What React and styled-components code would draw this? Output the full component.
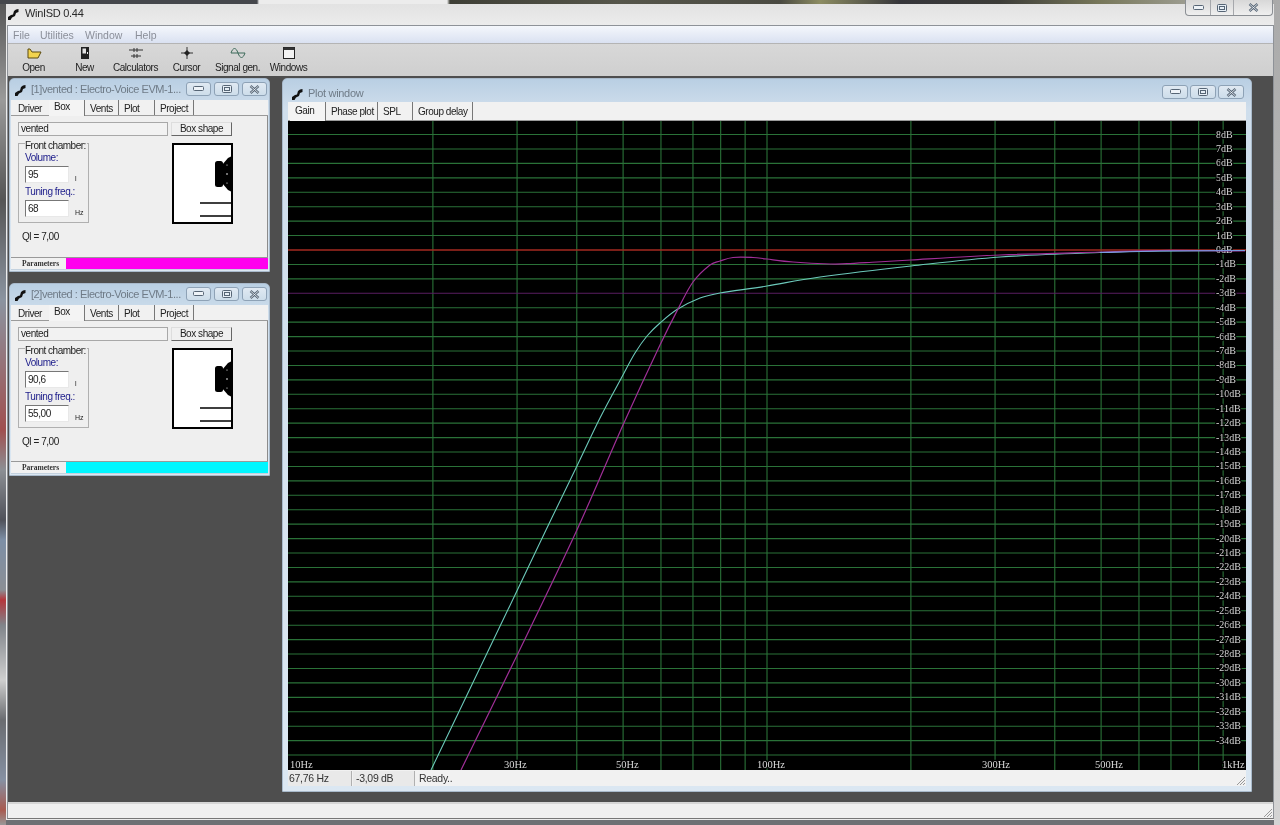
import styled, {createGlobalStyle} from "styled-components";

const GlobalStyle = createGlobalStyle`
  * {
    box-sizing: border-box;
  }
  html, body {
    margin: 0;
    padding: 0;
    background: #4d4d4d;
  }
  body {
    font-family: "Liberation Sans", Arial, sans-serif;
    font-size: 10px;
    letter-spacing: -0.45px;
    color: #222;
  }
`;

const Frame = styled.div`
  width: 1280px;
  height: 825px;
  padding: 0 6px 6px 7px;
  display: flex;
  flex-direction: column;
  overflow: hidden;
  filter: blur(0.3px);
  background:
    linear-gradient(90deg, #45474c 0, #45474c 257px, #ececec 259px, #ececec 447px, #3e3f36 450px, #55554a 620px, #4a4a42 780px, #8c8c62 820px, #35353a 900px, #3c3c38 1000px, #77775a 1100px, #9c9c90 1187px, #aaa 1280px) top / 100% 4px no-repeat,
    linear-gradient(180deg, #555 0, #9a9a9a 100px, #555 200px, #8b94a0 300px, #a05050 430px, #8c8f94 470px, #50525a 520px, #7d8fa6 540px, #8b8f95 590px, #b5363c 600px, #80848a 625px, #cfcfcf 680px, #6a6c70 720px, #8691a3 780px, #a85a50 810px, #999 825px) left / 6px 100% no-repeat,
    linear-gradient(180deg, #aaa 0, #d4d4d4 100%) right / 6px 100% no-repeat,
    linear-gradient(180deg, #6e7074 0, #6e7074 100%) bottom / 100% 5px no-repeat,
    linear-gradient(180deg, #e2e2e2 4px, #ececec 25px);
`;

const Caption = styled.div`
  height: 25px;
  flex: none;
  display: flex;
  align-items: flex-start;
`;

const AppIcon = styled.svg`
  width: 12px;
  height: 14px;
  flex: none;
  margin: ${(p) => p.$margin || "7px 6px 0 0"};
`;

const AppTitle = styled.span`
  margin-top: 7px;
  font-size: 11px;
  letter-spacing: -0.3px;
  color: #2a2a2a;
`;

const CaptionButtons = styled.div`
  margin-left: auto;
  margin-right: 1px;
  display: flex;
  height: 16px;
  background: linear-gradient(180deg, #d8d8d8, #efefef);
  border: 1px solid #8b8f94;
  border-top: 0;
  border-radius: 0 0 4px 4px;
`;

const CaptionButton = styled.div`
  width: ${(p) => p.$w}px;
  display: flex;
  align-items: center;
  justify-content: center;
  & + & {
    border-left: 1px solid #a6a8ac;
  }
`;

const Client = styled.div`
  flex: 1;
  display: flex;
  flex-direction: column;
  min-height: 0;
  border: 1px solid #8e9298;
  border-bottom: 1px solid #777;
`;

const MenuBar = styled.div`
  height: 18px;
  flex: none;
  display: flex;
  align-items: center;
  padding-left: 5px;
  background: linear-gradient(180deg, #f4f7fc, #dae1f1);
  border-bottom: 1px solid #b4b4b4;
`;

const MenuItem = styled.span`
  width: ${(p) => p.$w}px;
  font-size: 10.5px;
  letter-spacing: 0;
  color: #8b8f99;
`;

const Toolbar = styled.div`
  height: 32px;
  flex: none;
  display: flex;
  background: linear-gradient(180deg, #d8d8d8, #cfcfcf);
`;

const ToolButton = styled.div`
  width: 51px;
  display: flex;
  flex-direction: column;
  align-items: center;
  padding-top: 2px;
  font-size: 10px;
  line-height: 12px;
  color: #222;
  white-space: nowrap;
`;

const ToolIcon = styled.svg`
  width: 16px;
  height: 14px;
  margin-bottom: 2px;
`;

const Mdi = styled.div`
  flex: 1;
  min-height: 0;
  display: flex;
  gap: 12px;
  padding: 2px 0 0 1px;
  background: #4e4e4e;
  overflow: hidden;
`;

const LeftColumn = styled.div`
  width: 261px;
  flex: none;
  display: flex;
  flex-direction: column;
  gap: 11px;
`;

const ChildWindow = styled.div`
  display: flex;
  flex-direction: column;
  flex: none;
  width: ${(p) => p.$w}px;
  height: ${(p) => p.$h}px;
  padding: 0 ${(p) => p.$edge}px ${(p) => p.$edge}px;
  border-radius: 5px 5px 0 0;
  background: linear-gradient(180deg, #b9cfe3 0, #cfdeec 30px, #dbe7f2 100%);
  border: 1px solid #a9bacb;
`;

const ChildTitle = styled.div`
  height: ${(p) => p.$h}px;
  flex: none;
  display: flex;
  align-items: flex-start;
`;

const ChildName = styled.span`
  margin-top: ${(p) => p.$top}px;
  font-size: 11px;
  letter-spacing: ${(p) => p.$track}px;
  color: #6f7b87;
  white-space: nowrap;
`;

const ChildButtons = styled.div`
  margin-left: auto;
  margin-top: ${(p) => p.$top}px;
  margin-right: ${(p) => p.$right}px;
  display: flex;
  gap: ${(p) => p.$gap}px;
`;

const ChildButton = styled.div`
  width: ${(p) => p.$w}px;
  height: 14px;
  border: 1px solid #8ea2b6;
  border-radius: 3px;
  background: linear-gradient(180deg, #e0e9f2, #cdddea);
  display: flex;
  align-items: center;
  justify-content: center;
`;

const TabRow = styled.div`
  flex: none;
  height: ${(p) => p.$h}px;
  display: flex;
  padding-left: ${(p) => p.$pad}px;
  background: #f1f1f1;
  border-bottom: 1px solid #9a9a9a;
`;

const Tab = styled.div`
  width: ${(p) => p.$w}px;
  padding-left: 5px;
  padding-top: ${(p) => (p.$active ? 1 : 3)}px;
  font-size: 10px;
  line-height: 12px;
  color: #222;
  white-space: nowrap;
  border-right: ${(p) => (p.$plain ? "0" : "1px solid #777")};
  background: ${(p) => (p.$active ? "#f4f4f4" : "transparent")};
  height: ${(p) => (p.$active ? "calc(100% + 1px)" : "100%")};
`;

const PlotTab = styled(Tab)`
  padding-top: ${(p) => (p.$active ? 3 : 4)}px;
`;

const Body = styled.div`
  flex: 1;
  min-height: 0;
  display: flex;
  flex-direction: column;
  background: #efefef;
  border-right: 1px solid #8c8c8c;
  padding: 6px 0 0 7px;
`;

const TopLine = styled.div`
  display: flex;
  gap: 3px;
  width: 214px;
`;

const NameInput = styled.div`
  flex: 1;
  height: 14px;
  padding-left: 2px;
  font-size: 10px;
  line-height: 12px;
  background: #f2f2f2;
  border: 1px solid #a8a8a8;
`;

const ShapeButton = styled.div`
  width: 61px;
  height: 14px;
  font-size: 10px;
  line-height: 12px;
  text-align: center;
  background: #f0f0f0;
  border: 1px solid;
  border-color: #ddd #666 #666 #ddd;
`;

const MiddleLine = styled.div`
  display: flex;
  margin-top: 7px;
`;

const GroupBox = styled.div`
  position: relative;
  width: 71px;
  height: 80px;
  padding: 8px 0 0 6px;
  border: 1px solid #b0b0b0;
`;

const GroupLegend = styled.span`
  position: absolute;
  top: -4px;
  left: 6px;
  padding-right: 1px;
  background: #efefef;
  font-size: 10px;
  line-height: 11px;
  letter-spacing: -0.5px;
  white-space: nowrap;
`;

const FieldLabel = styled.div`
  font-size: 10px;
  line-height: 12px;
  height: 14px;
  color: #1c1c8a;
  white-space: nowrap;
`;

const FieldRow = styled.div`
  display: flex;
  align-items: flex-end;
  margin-bottom: 3px;
`;

const NumberInput = styled.div`
  width: 44px;
  height: 17px;
  padding-left: 2px;
  font-size: 10px;
  line-height: 15px;
  background: #fff;
  border: 1px solid;
  border-color: #777 #e8e8e8 #e8e8e8 #777;
`;

const Unit = styled.span`
  margin-left: 6px;
  font-size: 7px;
  letter-spacing: 0;
  line-height: 8px;
  color: #222;
`;

const BoxPicture = styled.svg`
  width: 61px;
  height: 81px;
  margin-left: 83px;
  flex: none;
`;

const QlText = styled.div`
  margin: 7px 0 0 4px;
  font-size: 10px;
  line-height: 12px;
`;

const ParamBar = styled.div`
  flex: none;
  height: 13px;
  display: flex;
  background: ${(p) => p.$color};
  border-top: 1px solid #999;
  border-bottom: 1px solid #c4d2df;
`;

const ParamTab = styled.div`
  width: 55px;
  background: #f1f1f1;
  padding-left: 11px;
  font-family: "Liberation Serif", serif;
  font-size: 7.5px;
  font-weight: bold;
  letter-spacing: 0;
  line-height: 11px;
  color: #333;
`;

const PlotBody = styled.div`
  flex: 1;
  min-height: 0;
  display: flex;
  flex-direction: column;
  background: #efefef;
`;

const Chart = styled.svg`
  display: block;
  flex: none;
  width: 958px;
  height: 649px;
  background: #000;
`;

const PlotStatus = styled.div`
  flex: 1;
  display: flex;
  position: relative;
  font-size: 10.5px;
  letter-spacing: -0.3px;
  line-height: 14px;
  padding-top: 1px;
  color: #333;
  background: #f1f1f1;
`;

const StatusCell = styled.div`
  width: ${(p) => p.$w}px;
  flex: none;
  padding-left: ${(p) => p.$pad}px;
  height: 15px;
  background: ${(p) => (p.$flat ? "transparent" : "#e9e9e9")};
  border-right: ${(p) => (p.$flat ? "0" : "1px solid #b0b0b0")};
  margin-right: ${(p) => (p.$flat ? 0 : 1)}px;
`;

const Grip = styled.svg`
  position: absolute;
  right: 0;
  bottom: 0;
  width: 11px;
  height: 11px;
`;

const AppStatus = styled.div`
  position: relative;
  flex: none;
  height: 16px;
  background: #f0f0f0;
  border-top: 2px solid #d6d6d6;
`;

const Wrench = ({margin}) => (
  <AppIcon viewBox="0 0 12 14" $margin={margin}>
    <path d="M1 13 L1 10 L4 8 L6 7.5 L7 4 L9 2.5 L11.5 2 L11.5 5 L9 6 L8 9 L5 10.5 L3.5 13 Z" fill="#111" />
  </AppIcon>
);

const MinGlyph = () => (
  <svg width="11" height="6" viewBox="0 0 11 6">
    <rect x="0.5" y="0.5" width="10" height="4" rx="1" fill="#eef3f8" stroke="#566575" />
  </svg>
);

const MaxGlyph = () => (
  <svg width="10" height="8" viewBox="0 0 10 8">
    <rect x="0.5" y="0.5" width="9" height="7" rx="1" fill="#e6eef5" stroke="#566575" />
    <rect x="2.5" y="2.5" width="5" height="3" fill="none" stroke="#566575" />
  </svg>
);

const CloseGlyph = () => (
  <svg width="11" height="9" viewBox="0 0 11 9">
    <path d="M1.5 1 L9.5 8 M9.5 1 L1.5 8" stroke="#566575" strokeWidth="2.4" />
    <path d="M1.5 1 L9.5 8 M9.5 1 L1.5 8" stroke="#f0f4f8" strokeWidth="0.8" />
  </svg>
);

const ChildControls = ({top, right, gap, w}) => (
  <ChildButtons $top={top} $right={right} $gap={gap}>
    <ChildButton $w={w}><MinGlyph /></ChildButton>
    <ChildButton $w={w}><MaxGlyph /></ChildButton>
    <ChildButton $w={w}><CloseGlyph /></ChildButton>
  </ChildButtons>
);

const tools = [
  {
    label: "Open",
    icon: <path d="M2 4 L2 12 L12 12 L15 6 L6 6 L4 3 L2 3 Z" fill="#f2d34e" stroke="#5a4a10" />,
  },
  {
    label: "New",
    icon: (
      <>
        <rect x="4" y="1" width="8" height="12" fill="#222" />
        <rect x="5.5" y="2.5" width="3.5" height="5" fill="#e4e4e4" />
        <rect x="10" y="6" width="1" height="2" fill="#eee" />
      </>
    ),
  },
  {
    label: "Calculators",
    icon: <path d="M1 4 H15 M3 10 H13 M6 2 V6 M9 2 V6 M6 8 V12 M9 8 V12" stroke="#333" fill="none" />,
  },
  {
    label: "Cursor",
    icon: (
      <>
        <path d="M8 1 V13 M2 7 H14" stroke="#333" />
        <path d="M8 4 L11 7 L8 10 L5 7 Z" fill="#222" />
      </>
    ),
  },
  {
    label: "Signal gen.",
    icon: <path d="M1 7 C3 1 6 1 8 7 C10 13 13 13 15 7 M1 7 H15" stroke="#3d6a5a" fill="none" />,
  },
  {
    label: "Windows",
    icon: (
      <>
        <rect x="2.5" y="1.5" width="11" height="11" fill="#f2f2f2" stroke="#222" />
        <rect x="2.5" y="1.5" width="11" height="2.5" fill="#333" />
      </>
    ),
  },
];

const Speaker = () => (
  <BoxPicture viewBox="0 0 61 81">
    <rect x="1" y="1" width="59" height="79" fill="#fff" stroke="#000" strokeWidth="2" />
    <rect x="43" y="18" width="8" height="26" rx="2.5" fill="#000" />
    <path d="M50 22 L56 15 L60 13 L60 49 L56 47 L50 40 Z" fill="#000" />
    <circle cx="55" cy="31" r="0.8" fill="#fff" />
    <circle cx="55" cy="22" r="0.6" fill="#fff" />
    <circle cx="55" cy="40" r="0.6" fill="#fff" />
    <path d="M28 60 H60 M28 73 H60" stroke="#000" strokeWidth="1.4" />
  </BoxPicture>
);

const ProjectWindow = ({index, volume, tuning, color}) => (
  <ChildWindow $w={261} $h={index === 1 ? 194 : 193} $edge={1}>
    <ChildTitle $h={21}>
      <Wrench margin="4px 5px 0 3px" />
      <ChildName $top={4} $track={-0.45}>[{index}]vented : Electro-Voice EVM-1...</ChildName>
      <ChildControls top={3} right={1} gap={3} w={25} />
    </ChildTitle>
    <TabRow $h={16} $pad={2}>
      <Tab $w={36} $plain>Driver</Tab>
      <Tab $w={36} $active>Box</Tab>
      <Tab $w={34}>Vents</Tab>
      <Tab $w={36}>Plot</Tab>
      <Tab $w={39}>Project</Tab>
    </TabRow>
    <Body>
      <TopLine>
        <NameInput>vented</NameInput>
        <ShapeButton>Box shape</ShapeButton>
      </TopLine>
      <MiddleLine>
        <GroupBox>
          <GroupLegend>Front chamber:</GroupLegend>
          <FieldLabel>Volume:</FieldLabel>
          <FieldRow>
            <NumberInput>{volume}</NumberInput>
            <Unit>l</Unit>
          </FieldRow>
          <FieldLabel>Tuning freq.:</FieldLabel>
          <FieldRow>
            <NumberInput>{tuning}</NumberInput>
            <Unit>Hz</Unit>
          </FieldRow>
        </GroupBox>
        <Speaker />
      </MiddleLine>
      <QlText>Ql = 7,00</QlText>
    </Body>
    <ParamBar $color={color}>
      <ParamTab>Parameters</ParamTab>
    </ParamBar>
  </ChildWindow>
);

// chart coordinates: plot area starts at page x 288, y 121
const OX = 288;
const OY = 121;
const freqX = (f) => 289 + Math.log10(f / 10) * 478 - OX;
const dbY = (db) => 250 - db * 14.43 - OY;

const freqLines = [20, 30, 40, 50, 60, 70, 80, 90, 100, 200, 300, 400, 500, 600, 700, 800, 900];
const dbLines = [];
for (let d = 8; d >= -35; d--) dbLines.push(d);

const hzLabels = [
  ["10Hz", 290],
  ["30Hz", 504],
  ["50Hz", 616],
  ["100Hz", 757],
  ["300Hz", 982],
  ["500Hz", 1095],
  ["1kHz", 1222],
];

const cyanPts = [
  [431, 770], [515, 595], [546, 530], [576, 468], [600, 418], [623, 375], [635, 353], [647, 336], [660, 323],
  [677, 309.5], [700, 298], [720, 293], [767, 286], [820, 277], [911, 266], [1000, 257], [1100, 252.5],
  [1160, 251], [1245, 250.5],
];
const purplePts = [
  [461, 770], [516.7, 656], [576, 532], [623, 425], [660, 345], [678, 309], [693, 282], [710, 265],
  [720, 261], [733, 257.5], [753, 257.5], [767, 259], [793, 262], [830, 264], [847, 263.7], [877, 262],
  [911, 260], [1000, 255], [1100, 252], [1160, 250.5], [1245, 251],
];

// smooth line through the points (catmull-rom to bezier)
const curvePath = (pts) => {
  const p = pts.map(([x, y]) => [x - OX, y - OY]);
  let d = `M${p[0][0]} ${p[0][1]}`;
  for (let i = 0; i < p.length - 1; i++) {
    const a = p[i - 1] || p[i];
    const b = p[i];
    const c = p[i + 1];
    const e = p[i + 2] || c;
    const c1x = b[0] + (c[0] - a[0]) / 6;
    const c1y = b[1] + (c[1] - a[1]) / 6;
    const c2x = c[0] - (e[0] - b[0]) / 6;
    const c2y = c[1] - (e[1] - b[1]) / 6;
    d += ` C${c1x.toFixed(1)} ${c1y.toFixed(1)} ${c2x.toFixed(1)} ${c2y.toFixed(1)} ${c[0]} ${c[1]}`;
  }
  return d;
};

const labelStyle = {
  fontFamily: '"Liberation Serif", serif',
  fill: "#d8d8d8",
  letterSpacing: 0,
  paintOrder: "stroke",
  stroke: "#000",
  strokeWidth: 2.5,
};

const GainChart = () => (
  <Chart viewBox="0 0 958 649">
    {freqLines.map((f) => (
      <line key={f} x1={freqX(f)} x2={freqX(f)} y1="0" y2="649" stroke="#2a7238" strokeWidth="1.1" />
    ))}
    {dbLines.map((d) => (
      <line
        key={d}
        x1="0"
        x2="958"
        y1={dbY(d)}
        y2={dbY(d)}
        stroke={d === 0 ? "#a52a20" : d === -3 ? "#5a1e62" : "#2a7238"}
        strokeWidth={d === 0 ? 1.4 : 1.1}
      />
    ))}
    {dbLines.filter((d) => d > -35).map((d) => (
      <text key={d} x={1216 - OX} y={dbY(d) + 3} fontSize="10" style={labelStyle}>
        {d}dB
      </text>
    ))}
    {hzLabels.map(([t, x]) => (
      <text key={t} x={x - OX} y="647" fontSize="10.5" style={labelStyle}>
        {t}
      </text>
    ))}
    <path d={curvePath(cyanPts)} fill="none" stroke="#6cc9bb" strokeWidth="1.1" />
    <path d={curvePath(purplePts)} fill="none" stroke="#a02f98" strokeWidth="1.2" />
    <path d={curvePath(cyanPts.slice(-3))} fill="none" stroke="#7a9ce0" strokeWidth="1.1" />
  </Chart>
);

const GripMark = () => (
  <Grip viewBox="0 0 11 11">
    <path d="M10 2 L2 10 M10 5 L5 10 M10 8 L8 10" stroke="#999" />
  </Grip>
);

const App = () => {
  return (
    <Frame>
      <GlobalStyle />
      <Caption>
        <Wrench />
        <AppTitle>WinISD 0.44</AppTitle>
        <CaptionButtons>
          <CaptionButton $w={24}><MinGlyph /></CaptionButton>
          <CaptionButton $w={23}><MaxGlyph /></CaptionButton>
          <CaptionButton $w={39}><CloseGlyph /></CaptionButton>
        </CaptionButtons>
      </Caption>
      <Client>
        <MenuBar>
          <MenuItem $w={27}>File</MenuItem>
          <MenuItem $w={45}>Utilities</MenuItem>
          <MenuItem $w={50}>Window</MenuItem>
          <MenuItem $w={30}>Help</MenuItem>
        </MenuBar>
        <Toolbar>
          {tools.map((t) => (
            <ToolButton key={t.label}>
              <ToolIcon viewBox="0 0 16 14">{t.icon}</ToolIcon>
              {t.label}
            </ToolButton>
          ))}
        </Toolbar>
        <Mdi>
          <LeftColumn>
            <ProjectWindow index={1} volume="95" tuning="68" color="#ff00ee" />
            <ProjectWindow index={2} volume="90,6" tuning="55,00" color="#00f6ff" />
          </LeftColumn>
          <ChildWindow $w={970} $h={714} $edge={5}>
            <ChildTitle $h={23}>
              <Wrench margin="8px 5px 0 3px" />
              <ChildName $top={8} $track={-0.3}>Plot window</ChildName>
              <ChildControls top={6} right={2} gap={2} w={26} />
            </ChildTitle>
            <TabRow $h={19} $pad={2}>
              <PlotTab $w={36} $active>Gain</PlotTab>
              <PlotTab $w={52}>Phase plot</PlotTab>
              <PlotTab $w={35}>SPL</PlotTab>
              <PlotTab $w={60}>Group delay</PlotTab>
            </TabRow>
            <PlotBody>
              <GainChart />
              <PlotStatus>
                <StatusCell $w={64} $pad={1}>67,76 Hz</StatusCell>
                <StatusCell $w={62} $pad={3}>-3,09 dB</StatusCell>
                <StatusCell $w={100} $pad={3} $flat>Ready..</StatusCell>
                <GripMark />
              </PlotStatus>
            </PlotBody>
          </ChildWindow>
        </Mdi>
        <AppStatus>
          <GripMark />
        </AppStatus>
      </Client>
    </Frame>
  );
};

export default App;
